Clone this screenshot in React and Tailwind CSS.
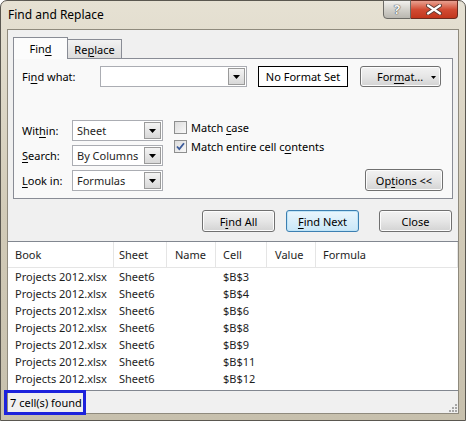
import React from 'react';

const U = ({ children }) => <span className="underline underline-offset-[2px]">{children}</span>;

const Arrow = () => (
  <svg width="7" height="4" viewBox="0 0 7 4" className="block">
    <path d="M0 0h7L3.5 4z" fill="#000" />
  </svg>
);

const Combo = ({ w, value }) => (
  <div className={`${w} h-[21px] flex items-stretch bg-white border border-[#abadb3]`}>
    <div className="flex-1 flex items-center pl-[4px] text-[#1e1e1e]">{value}</div>
    <div className="w-[17px] m-[1px] flex items-center justify-center border border-[#9a9a9a] bg-gradient-to-b from-[#f4f4f4] to-[#d8d8d8]">
      <Arrow />
    </div>
  </div>
);

const Btn = ({ children, w, primary }) => (
  <div
    className={`${w} h-[22px] flex items-center justify-center rounded-[3px] border ${
      primary
        ? 'border-[#3c7fb1] shadow-[inset_0_0_0_1px_#bfe4f7] bg-gradient-to-b from-[#eaf6fd] to-[#c9e7f8]'
        : 'border-[#707070] shadow-[inset_0_0_0_1px_#fcfcfc] bg-gradient-to-b from-[#f2f2f2] via-[#e6e6e6] to-[#d3d3d3]'
    } text-black`}
  >
    {children}
  </div>
);

const Check = ({ checked }) => (
  <div className="w-[13px] h-[13px] border border-[#8e8f8f] bg-gradient-to-br from-[#dcdcdc] to-[#f8f8f8] flex items-center justify-center">
    {checked && (
      <svg width="9" height="9" viewBox="0 0 9 9">
        <path d="M1 4.5l2.3 2.6L8 1.2" stroke="#3b5b9a" strokeWidth="1.8" fill="none" />
      </svg>
    )}
  </div>
);

const cols = [
  { name: 'Book', w: 'w-[106px]', pl: 'pl-[7px]' },
  { name: 'Sheet', w: 'w-[53px]', pl: 'pl-[5px]' },
  { name: 'Name', w: 'w-[49px]', pl: 'pl-[8px]' },
  { name: 'Cell', w: 'w-[51px]', pl: 'pl-[7px]' },
  { name: 'Value', w: 'w-[49px]', pl: 'pl-[8px]' },
  { name: 'Formula', w: 'flex-1', pl: 'pl-[7px]' },
];

const cells = ['$B$3', '$B$4', '$B$6', '$B$8', '$B$9', '$B$11', '$B$12'];

export default function App() {
  return (
    <div className="relative w-[466px] h-[421px] font-['Noto_Sans',sans-serif] text-[11px] leading-none text-black whitespace-nowrap">
      <div className="w-full h-full flex flex-col rounded-t-[7px] border border-[#5a5750] bg-gradient-to-b from-[#e6e1d3] via-[#d2cbb8] to-[#c7c0ad] px-[6px] pb-[6px]">
        {/* title bar */}
        <div className="h-[28px] flex items-start relative">
          <div className="pl-[1px] pt-[8px] text-[12px]">Find and Replace</div>
          <div className="absolute right-[1px] top-[-1px] flex">
            <div className="w-[28px] h-[19px] rounded-bl-[4px] border border-[#6c6b66] bg-gradient-to-b from-[#f2f1ee] via-[#d3d1cb] to-[#b9b7b0] flex items-center justify-center text-[13px] font-bold text-[#f8f8f8] [text-shadow:0_0_1px_#333,0_0_1px_#333]">?</div>
            <div className="w-[47px] h-[19px] rounded-br-[4px] border border-l-0 border-[#6b2b20] bg-gradient-to-b from-[#e8a090] via-[#d24b33] to-[#c2361c] flex items-center justify-center">
              <svg width="16" height="11" viewBox="0 0 16 11">
                <path d="M2 1.5l12 8M14 1.5l-12 8" stroke="#5a3a33" strokeWidth="4" strokeLinecap="round" />
                <path d="M2 1.5l12 8M14 1.5l-12 8" stroke="#fff" strokeWidth="2.2" strokeLinecap="round" />
              </svg>
            </div>
          </div>
        </div>

        {/* client */}
        <div className="flex-1 flex flex-col border border-[#8f8a7d] bg-[#f0f0f0]">
          {/* tabs */}
          <div className="pl-[5px] pt-[6px] flex items-end">
            <div className="w-[55px] h-[22px] border border-b-0 border-[#898c95] bg-[#fcfcfc] flex items-center justify-center relative top-[1px] z-10 pb-[1px]">
              Fin<U>d</U>
            </div>
            <div className="w-[54px] h-[19px] border border-l-0 border-b-0 border-[#898c95] bg-gradient-to-b from-[#f2f2f2] to-[#dcdcdc] flex items-center justify-center">
              Re<U>p</U>lace
            </div>
          </div>

          {/* panel */}
          <div className="mx-[5px] h-[141px] border border-[#898c95] bg-[#f9f9f9] pl-[8px] pr-[9px] pt-[7px] flex flex-col">
            <div className="flex items-center h-[21px]">
              <div className="w-[78px]">Fi<U>n</U>d what:</div>
              <Combo w="w-[147px]" value="" />
              <div className="ml-[11px] w-[90px] h-[21px] border border-black bg-white flex items-center justify-center">No Format Set</div>
              <div className="ml-[12px]">
                <div className="w-[81px] h-[21px] rounded-[3px] border border-[#707070] shadow-[inset_0_0_0_1px_#fcfcfc] bg-gradient-to-b from-[#f2f2f2] via-[#e6e6e6] to-[#d3d3d3] flex items-center pl-[16px] relative">
                  For<U>m</U>at...
                  <div className="absolute right-[4px] top-[9px]">
                    <svg width="5" height="3" viewBox="0 0 5 3" className="block"><path d="M0 0h5L2.5 3z" fill="#000" /></svg>
                  </div>
                </div>
              </div>
            </div>

            <div className="mt-[33px] flex">
              <div className="flex flex-col gap-[4px]">
                {[
                  [<>Wit<U>h</U>in:</>, 'Sheet'],
                  [<><U>S</U>earch:</>, 'By Columns'],
                  [<><U>L</U>ook in:</>, 'Formulas'],
                ].map(([l, v], i) => (
                  <div key={i} className="flex items-center h-[21px]">
                    <div className="w-[50px]">{l}</div>
                    <Combo w="w-[91px]" value={v} />
                  </div>
                ))}
              </div>
              <div className="ml-[11px] pt-[1px] flex flex-col gap-[6px]">
                <div className="flex items-center gap-[4px] h-[13px]">
                  <Check />
                  <span>Match <U>c</U>ase</span>
                </div>
                <div className="flex items-center gap-[4px] h-[13px]">
                  <Check checked />
                  <span>Match entire cell c<U>o</U>ntents</span>
                </div>
              </div>
              <div className="flex-1 flex items-end justify-end">
                <Btn w="w-[78px]">
                  Op<U>t</U>ions &lt;&lt;
                </Btn>
              </div>
            </div>
          </div>

          {/* buttons */}
          <div className="mt-[11px] flex justify-end pr-[6px]">
            <Btn w="w-[73px]">
              F<U>i</U>nd All
            </Btn>
            <div className="ml-[11px]">
              <Btn w="w-[73px]" primary>
                <U>F</U>ind Next
              </Btn>
            </div>
            <div className="ml-[20px]">
              <Btn w="w-[73px]">Close</Btn>
            </div>
          </div>

          {/* result list */}
          <div className="mt-[9px] h-[150px] border-y border-[#828790] bg-white flex flex-col">
            <div className="h-[26px] flex border-b border-[#e5e5e5]">
              {cols.map((c) => (
                <div key={c.name} className={`${c.w} ${c.pl} flex items-center border-r border-[#e5e5e5] text-[#1e1e1e]`}>
                  {c.name}
                </div>
              ))}
            </div>
            <div>
              {cells.map((c) => (
                <div key={c} className="h-[17px] flex items-center text-[#1e1e1e]">
                  <div className="w-[106px] pl-[7px]">Projects 2012.xlsx</div>
                  <div className="w-[53px] pl-[5px]">Sheet6</div>
                  <div className="w-[49px]"></div>
                  <div className="w-[51px] pl-[7px]">{c}</div>
                </div>
              ))}
            </div>
          </div>

          {/* status bar */}
          <div className="flex-1 flex items-center pl-[2px] relative">
            <span>7 cell(s) found</span>
            <div className="absolute right-[1px] bottom-[1px]">
              <svg width="8" height="8" viewBox="0 0 8 8" className="block">
                <g fill="#a7a7a7">
                  <rect x="6" y="0" width="2" height="2" />
                  <rect x="3" y="3" width="2" height="2" />
                  <rect x="6" y="3" width="2" height="2" />
                  <rect x="0" y="6" width="2" height="2" />
                  <rect x="3" y="6" width="2" height="2" />
                  <rect x="6" y="6" width="2" height="2" />
                </g>
              </svg>
            </div>
          </div>
        </div>
      </div>

      {/* annotation box */}
      <div className="absolute left-[4px] top-[390px] w-[82px] h-[25px] border-[3px] border-[#1c22dc]" />
    </div>
  );
}
